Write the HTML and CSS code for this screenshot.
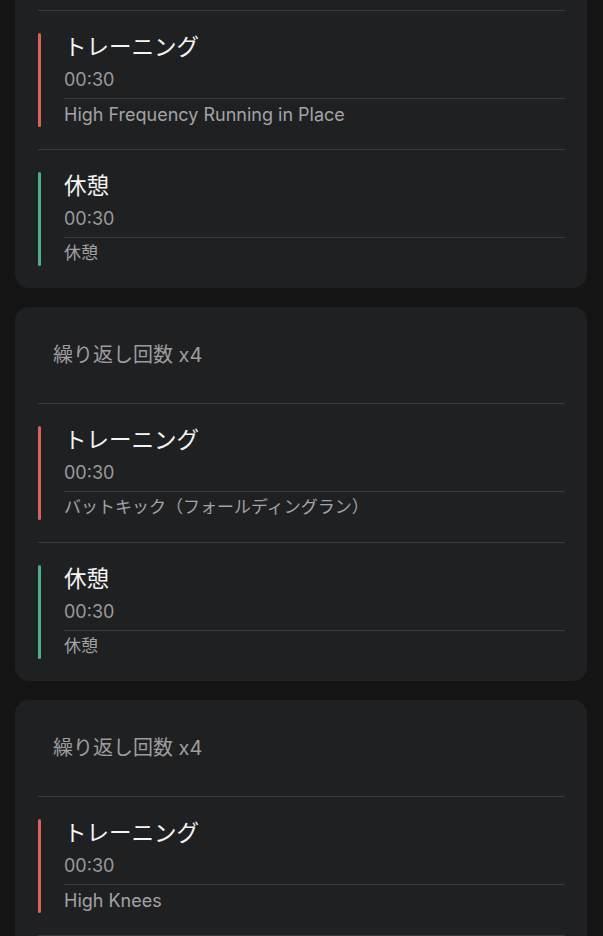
FILE: index.html
```html
<!DOCTYPE html>
<html lang="ja">
<head>
  <meta charset="UTF-8">
  <title>ワークアウト</title>
  <link rel="stylesheet" href="styles.css">
</head>
<body>

  <div class="list">

    <div class="card card-cut">
      <div class="step train">
        <div class="bar"></div>
        <div class="info">
          <div class="title">トレーニング</div>
          <div class="time">00:30</div>
          <div class="desc en">High Frequency Running in Place</div>
        </div>
      </div>
      <div class="step rest">
        <div class="bar"></div>
        <div class="info">
          <div class="title">休憩</div>
          <div class="time">00:30</div>
          <div class="desc">休憩</div>
        </div>
      </div>
    </div>

    <div class="card">
      <div class="repeat">繰り返し回数 x4</div>
      <div class="step train">
        <div class="bar"></div>
        <div class="info">
          <div class="title">トレーニング</div>
          <div class="time">00:30</div>
          <div class="desc">バットキック（フォールディングラン）</div>
        </div>
      </div>
      <div class="step rest">
        <div class="bar"></div>
        <div class="info">
          <div class="title">休憩</div>
          <div class="time">00:30</div>
          <div class="desc">休憩</div>
        </div>
      </div>
    </div>

    <div class="card">
      <div class="repeat">繰り返し回数 x4</div>
      <div class="step train">
        <div class="bar"></div>
        <div class="info">
          <div class="title">トレーニング</div>
          <div class="time">00:30</div>
          <div class="desc en">High Knees</div>
        </div>
      </div>
      <!-- next step continues below the fold -->
      <div class="sep"></div>
    </div>

  </div>

</body>
</html>
```

FILE: styles.css
```css
* {
  box-sizing: border-box;
}

body {
  margin: 0;
  background: #141414;
  font-family: Inter, "Noto Sans CJK JP", sans-serif;
  color: #f2f2f2;
  overflow: hidden;
}

.list {
  display: flex;
  flex-direction: column;
  gap: 19px;
  padding: 0 16px 0 15px;
}

.card {
  background: #1f2022;
  border-radius: 14px;
}

/* first card is scrolled off the top */
.card-cut {
  margin-top: -20px;
  border-radius: 0 0 14px 14px;
  padding-top: 20px;
}

.card-cut .step:first-child {
  margin-top: 10px;
}

.repeat {
  height: 96px;
  display: flex;
  align-items: center;
  padding-left: 38px;
  padding-bottom: 3px;
  font-size: 20px;
  color: #9d9d9f;
}

.step {
  display: flex;
  margin: 0 22px 0 23px;
  padding: 22px 0;
  border-top: 1px solid #38393b;
}

.sep {
  height: 40px;
  margin: 0 22px 0 23px;
  border-top: 1px solid #38393b;
}

.bar {
  width: 3px;
  border-radius: 2px;
  flex-shrink: 0;
}

.train .bar { background: #d9625b; }
.rest .bar { background: #4fae8c; }

.info {
  flex: 1;
  margin-left: 23px;
}

.title {
  height: 27px;
  line-height: 27px;
  font-size: 22.5px;
  color: #f4f4f4;
}

.time {
  margin-top: 7px;
  line-height: 26px;
  font-size: 18px;
  color: #9a9a9c;
  padding-bottom: 5px;
  border-bottom: 1px solid #38393b;
}

.desc {
  padding-top: 3px;
  line-height: 25px;
  font-size: 17px;
  color: #a3a3a5;
}

.desc.en {
  font-size: 18px;
}
```
